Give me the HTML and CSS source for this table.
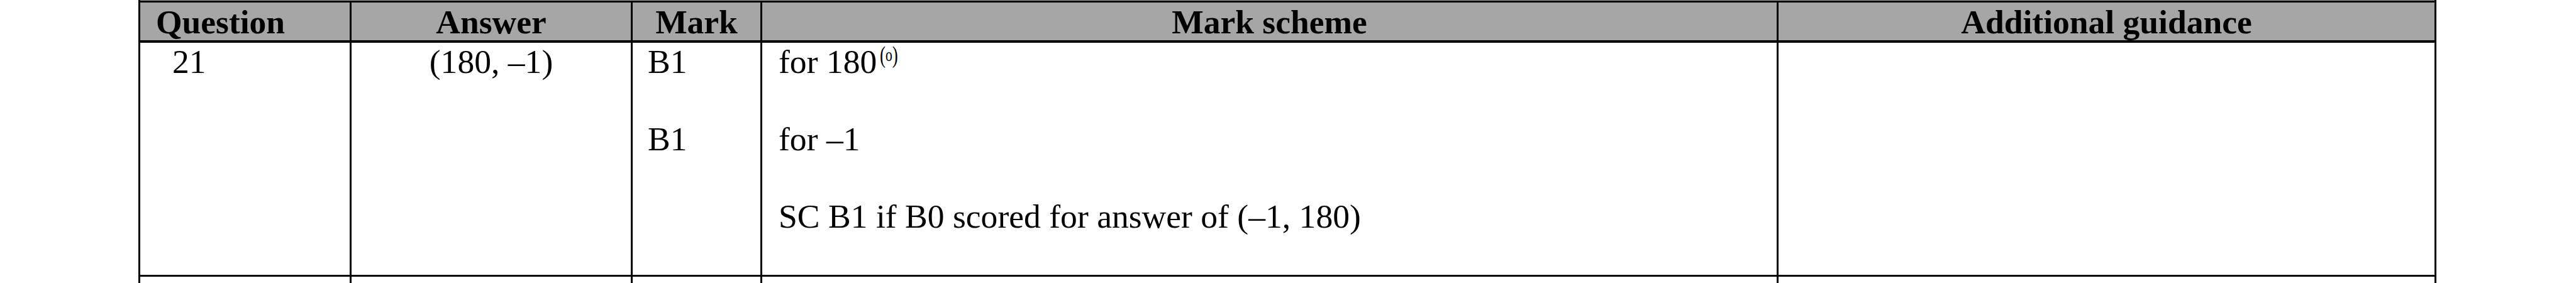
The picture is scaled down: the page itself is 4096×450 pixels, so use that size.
FILE: index.html
```html
<!DOCTYPE html>
<html lang="en">
<head>
<meta charset="utf-8">
<title>Mark scheme</title>
<link rel="stylesheet" href="styles.css">
</head>
<body>
<div class="sheet">
  <div class="prev-strip"></div>
  <div class="grid">
    <div class="hcell left">Question</div>
    <div class="hcell">Answer</div>
    <div class="hcell">Mark</div>
    <div class="hcell">Mark scheme</div>
    <div class="hcell">Additional guidance</div>

    <div class="cell q"><p>21</p></div>
    <div class="cell center"><p>(180, –1)</p></div>
    <div class="cell mark"><p>B1</p><p>B1</p></div>
    <div class="cell scheme"><p>for 180<span class="sup">(<span class="deg">o</span>)</span></p><p>for –1</p><p>SC B1 if B0 scored for answer of (–1, 180)</p></div>
    <div class="cell"></div>

    <div class="cell next"></div>
    <div class="cell next"></div>
    <div class="cell next"></div>
    <div class="cell next"></div>
    <div class="cell next"></div>
  </div>
</div>
</body>
</html>
```
FILE: styles.css
```css
html, body {
  margin: 0;
  padding: 0;
  background: #ffffff;
}

body {
  font-family: "Liberation Serif", "Times New Roman", serif;
  color: #000000;
  overflow: hidden;
}

.sheet {
  margin-left: 220px;
  width: 3654px;
}

.prev-strip {
  height: 1px;
  background: #a6a6a6;
  border-left: 3px solid #000;
  border-right: 3px solid #000;
}

.grid {
  display: grid;
  grid-template-columns: 333px 444px 203px 1613px 1043px;
  grid-template-rows: 61px 369px 10px;
  gap: 3px;
  padding: 3px 3px 0 3px;
  background: #000;
}

.hcell {
  background: #a6a6a6;
  border-bottom: 1px solid #000;
  box-sizing: border-box;
  font-size: 53.5px;
  font-weight: bold;
  line-height: 60px;
  padding-top: 1px;
  text-align: center;
  white-space: nowrap;
}

.hcell.left {
  text-align: left;
  padding-left: 25px;
}

.cell {
  background: #ffffff;
  font-size: 53.6px;
  line-height: 61.5px;
  white-space: nowrap;
}

.cell p {
  margin: 0 0 61.5px 0;
}

.cell.q {
  padding-left: 51px;
}

.cell.center {
  text-align: center;
}

.cell.mark {
  padding-left: 24px;
}

.cell.scheme {
  padding-left: 26px;
}

.sup {
  display: inline-block;
  font-size: 33px;
  line-height: 0;
  margin-left: 5px;
  vertical-align: 17px;
  transform: scale(0.82, 1.12);
  transform-origin: left center;
}

.deg {
  font-size: 0.8em;
  vertical-align: 3px;
}
```
